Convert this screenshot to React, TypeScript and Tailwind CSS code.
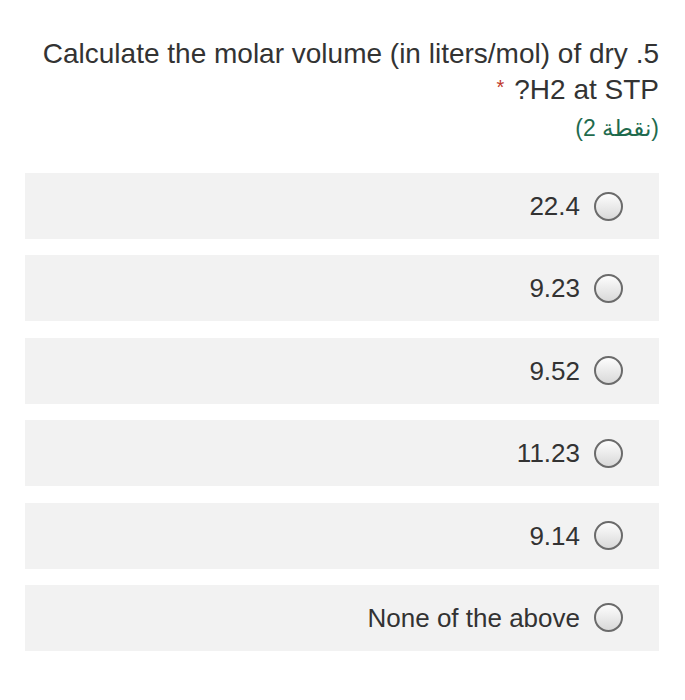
const options = ["22.4", "9.23", "9.52", "11.23", "9.14", "None of the above"];

function Radio() {
  return (
    <span className="h-[29px] w-[29px] shrink-0 rounded-full border-2 border-[#6b6b6b] bg-gradient-to-b from-[#fdfdfd] to-[#d9d9d9]" />
  );
}

export default function App() {
  return (
    <div
      className="min-h-screen w-[685px] bg-white pl-[25px] pr-[26px] pt-[36px] text-[#333333]"
      style={{ fontFamily: '"Liberation Sans", "DejaVu Sans", Arial, sans-serif' }}
    >
      {/* Question */}
      <div dir="rtl" className="text-right text-[28px] leading-[36px]">
        5. Calculate the molar volume (in liters/mol) of dry H2 at STP?
        <span className="mr-[10px] inline-block align-top text-[20px] leading-[30px] text-[#c0392b]">*</span>
      </div>
      <div className="mt-[6px] h-[28px] text-right text-[23px] leading-[28px] text-[#1f6b4e]">
        <span dir="ltr">(2 نقطة)</span>
      </div>

      {/* Options */}
      <div className="mt-[31px] flex flex-col gap-[16.4px]">
        {options.map((opt) => (
          <div
            key={opt}
            className="flex h-[66px] items-center justify-end gap-[14px] bg-[#f2f2f2] pr-[36px]"
          >
            <span className="text-[26px] leading-none">{opt}</span>
            <Radio />
          </div>
        ))}
      </div>
    </div>
  );
}
